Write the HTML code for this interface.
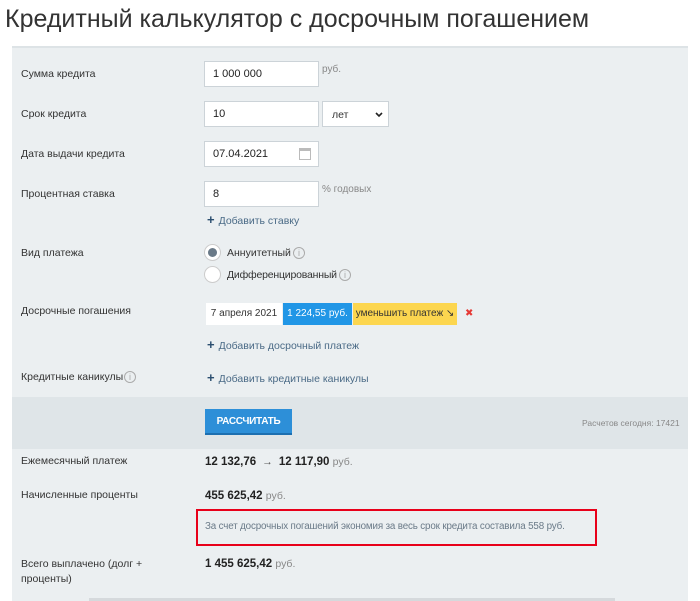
<!DOCTYPE html>
<html><head><meta charset="utf-8"><style>
*{margin:0;padding:0;box-sizing:border-box}
body{width:700px;height:601px;background:#fff;font-family:"Liberation Sans","DejaVu Sans",sans-serif;color:#333;position:relative;overflow:hidden;font-size:10.5px}
.a{position:absolute;white-space:nowrap}
h1{position:absolute;left:5px;top:5px;font-weight:normal;font-size:25px;color:#333;white-space:nowrap}
.panel{left:12px;top:46px;width:676px;height:555px;background:#ebeff1;border-top:2px solid #dde3e6}
.lbl{left:21px;font-size:10.5px;color:#333}
.inp{left:204px;width:115px;height:26px;background:#fff;border:1px solid #ccd3d8;padding-left:8px;line-height:24px;font-size:11px;color:#222}
.unit{font-size:10px;color:#888}
.link{font-size:10.5px;color:#4a6a86}
.plus{color:#2c4f70;font-weight:bold;font-size:13px;margin-right:4px}
.radio{width:17px;height:17px;border-radius:50%;background:#fff;border:1px solid #ccc}
.info{width:12px;height:12px;border-radius:50%;border:1px solid #aaa;color:#aaa;font-size:9px;text-align:center;line-height:10px}
.v{left:205px;font-size:11.5px;font-weight:bold;color:#222}
.v span{font-weight:normal;color:#888;font-size:10.5px}
</style></head><body>
<h1>Кредитный калькулятор с досрочным погашением</h1>
<div class="a panel"></div>
<div class="a" style="left:12px;top:397px;width:676px;height:52px;background:#dfe5e8"></div>

<div class="a lbl" style="top:68px">Сумма кредита</div>
<div class="a inp" style="top:61px">1 000 000</div>
<div class="a unit" style="left:322px;top:64px">руб.</div>

<div class="a lbl" style="top:108px">Срок кредита</div>
<div class="a inp" style="top:101px">10</div>
<div class="a" style="left:322px;top:101px;width:67px;height:26px;background:#fff;border:1px solid #ccd3d8;padding-left:9px;line-height:26px;font-size:10.5px">лет<svg style="position:absolute;right:5px;top:10px" width="8" height="6" viewBox="0 0 8 6"><path d="M1 1l3 3 3-3" stroke="#222" stroke-width="1.6" fill="none"/></svg></div>

<div class="a lbl" style="top:148px">Дата выдачи кредита</div>
<div class="a inp" style="top:141px">07.04.2021<span style="position:absolute;left:94px;top:6px;width:12px;height:12px;border:1px solid #bbb;border-top:3px solid #bbb"></span></div>

<div class="a lbl" style="top:188px">Процентная ставка</div>
<div class="a inp" style="top:181px">8</div>
<div class="a unit" style="left:322px;top:184px">% годовых</div>
<div class="a link" style="left:207px;top:212px"><span class="plus">+</span>Добавить ставку</div>

<div class="a lbl" style="top:247px">Вид платежа</div>
<div class="a radio" style="left:204px;top:244px"><div style="margin:3px;width:9px;height:9px;border-radius:50%;background:#6a7a88"></div></div>
<div class="a" style="left:227px;top:247px;font-size:10.5px">Аннуитетный</div>
<div class="a info" style="left:293px;top:247px">i</div>
<div class="a radio" style="left:204px;top:266px"></div>
<div class="a" style="left:227px;top:269px;font-size:10.5px;letter-spacing:-0.2px">Дифференцированный</div>
<div class="a info" style="left:339px;top:269px">i</div>

<div class="a lbl" style="top:305px">Досрочные погашения</div>
<div class="a" style="left:206px;top:303px;width:76px;height:22px;background:#fff;line-height:22px;text-align:center;font-size:10px">7 апреля 2021</div>
<div class="a" style="left:283px;top:303px;width:69px;height:22px;background:#2196e6;color:#fff;line-height:22px;text-align:center;font-size:10px">1 224,55 руб.</div>
<div class="a" style="left:353px;top:303px;width:104px;height:22px;background:#fcd64f;line-height:22px;text-align:center;font-size:10px">уменьшить платеж ↘</div>
<div class="a" style="left:465px;top:308px;color:#e53935;font-weight:bold;font-size:10px">✖</div>
<div class="a link" style="left:207px;top:337px"><span class="plus">+</span>Добавить досрочный платеж</div>

<div class="a lbl" style="top:371px">Кредитные каникулы</div>
<div class="a info" style="left:124px;top:371px">i</div>
<div class="a link" style="left:207px;top:370px"><span class="plus">+</span>Добавить кредитные каникулы</div>

<div class="a" style="left:205px;top:409px;width:87px;height:26px;background:#2d8fd8;border-bottom:2px solid #1d6fb0;color:#fff;font-weight:bold;font-size:10px;text-align:center;line-height:25px;letter-spacing:-0.3px">РАССЧИТАТЬ</div>
<div class="a" style="left:582px;top:418px;font-size:8.5px;color:#888">Расчетов сегодня: 17421</div>

<div class="a lbl" style="top:455px">Ежемесячный платеж</div>
<div class="a v" style="top:456px">12 132,76 <span style="color:#555">&nbsp;→&nbsp;</span> 12 117,90 <span>руб.</span></div>
<div class="a lbl" style="top:489px">Начисленные проценты</div>
<div class="a v" style="top:490px">455 625,42 <span>руб.</span></div>
<div class="a" style="left:196px;top:509px;width:401px;height:37px;border:2px solid #e8001a;"></div>
<div class="a" style="left:205px;top:521px;font-size:9.8px;color:#6a7a88;letter-spacing:-0.15px">За счет досрочных погашений экономия за весь срок кредита составила 558 руб.</div>
<div class="a lbl" style="top:557px;line-height:15px">Всего выплачено (долг +<br>проценты)</div>
<div class="a v" style="top:558px">1 455 625,42 <span>руб.</span></div>
<div class="a" style="left:89px;top:598px;width:526px;height:3px;background:#d5d9dc"></div>
</body></html>
